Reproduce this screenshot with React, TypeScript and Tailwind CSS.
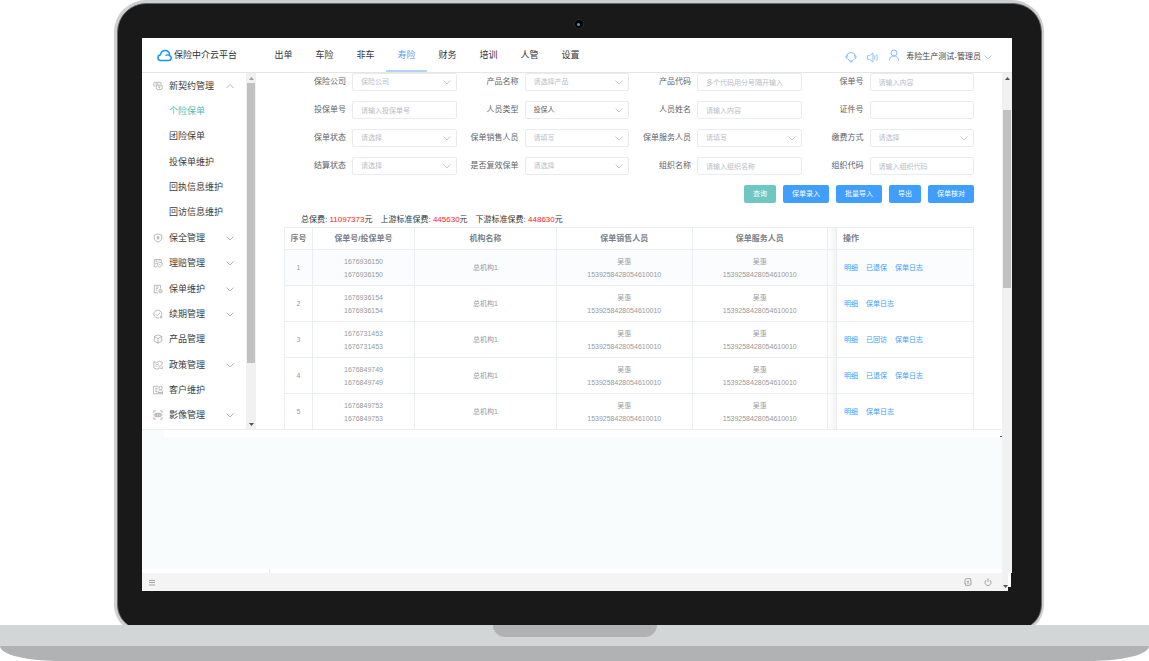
import React, { useState } from "react";

type IconName =
  | "contract"
  | "shield"
  | "claim"
  | "policy"
  | "renewal"
  | "product"
  | "rules"
  | "customer"
  | "image";

interface MenuEntry {
  label: string;
  icon?: IconName;
  arrow?: "up" | "down";
  active?: boolean;
}

interface Field {
  id: string;
  label: string;
  kind: "input" | "select";
  placeholder?: string;
  value?: string;
}

interface PolicyRow {
  no: string;
  links: string[];
}

const NAV_ITEMS = ["出单", "车险", "非车", "寿险", "财务", "培训", "人管", "设置"];

const MENU: MenuEntry[] = [
  { label: "新契约管理", icon: "contract", arrow: "up" },
  { label: "个险保单", active: true },
  { label: "团险保单" },
  { label: "投保单维护" },
  { label: "回执信息维护" },
  { label: "回访信息维护" },
  { label: "保全管理", icon: "shield", arrow: "down" },
  { label: "理赔管理", icon: "claim", arrow: "down" },
  { label: "保单维护", icon: "policy", arrow: "down" },
  { label: "续期管理", icon: "renewal", arrow: "down" },
  { label: "产品管理", icon: "product" },
  { label: "政策管理", icon: "rules", arrow: "down" },
  { label: "客户维护", icon: "customer" },
  { label: "影像管理", icon: "image", arrow: "down" },
];

const FIELDS: Field[] = [
  { id: "company", label: "保险公司", kind: "select", placeholder: "保险公司" },
  { id: "product", label: "产品名称", kind: "select", placeholder: "请选择产品" },
  { id: "productCode", label: "产品代码", kind: "input", placeholder: "多个代码用分号隔开输入" },
  { id: "policyNo", label: "保单号", kind: "input", placeholder: "请输入内容" },
  { id: "applyNo", label: "投保单号", kind: "input", placeholder: "请输入投保单号" },
  { id: "personType", label: "人员类型", kind: "select", value: "投保人" },
  { id: "personName", label: "人员姓名", kind: "input", placeholder: "请输入内容" },
  { id: "idNo", label: "证件号", kind: "input" },
  { id: "status", label: "保单状态", kind: "select", placeholder: "请选择" },
  { id: "seller", label: "保单销售人员", kind: "select", placeholder: "请填写" },
  { id: "server", label: "保单服务人员", kind: "select", placeholder: "请填写" },
  { id: "payMode", label: "缴费方式", kind: "select", placeholder: "请选择" },
  { id: "settle", label: "结算状态", kind: "select", placeholder: "请选择" },
  { id: "revived", label: "是否复效保单", kind: "select", placeholder: "请选择" },
  { id: "orgName", label: "组织名称", kind: "input", placeholder: "请输入组织名称" },
  { id: "orgCode", label: "组织代码", kind: "input", placeholder: "请输入组织代码" },
];

const TOTALS = [
  { label: "总保费", value: "11097373" },
  { label: "上游标准保费", value: "445630" },
  { label: "下游标准保费", value: "448630" },
];

const ROWS: PolicyRow[] = [
  { no: "1676936150", links: ["明细", "已退保", "保单日志"] },
  { no: "1676936154", links: ["明细", "保单日志"] },
  { no: "1676731453", links: ["明细", "已回访", "保单日志"] },
  { no: "1676849749", links: ["明细", "已退保", "保单日志"] },
  { no: "1676849753", links: ["明细", "保单日志"] },
];

const STAFF = { name: "吴惠", code: "1539258428054610010" };

const ICON_PATHS: Record<IconName, React.ReactNode> = {
  contract: (
    <>
      <path d="M6 12H4a2 2 0 0 1-2-2V5a2 2 0 0 1 2-2h13a2 2 0 0 1 2 2v3M6 7h8" />
      <path d="M8 10h13a1 1 0 0 1 1 1v5a5 5 0 0 1-5 5h-4a5 5 0 0 1-5-5zM12 14h6M15 14v4" />
    </>
  ),
  shield: (
    <>
      <path d="M12 2l9 3v7c0 5-4 8-9 10-5-2-9-5-9-10V5z" />
      <path d="M12 7v8M8 10h8M9 14h6" />
    </>
  ),
  claim: (
    <>
      <path d="M10 21H3V4h17v6M8 2v4M15 2v4M6 9h5M6 13h3" />
      <path d="M16 10l6 2v4c0 3-3 5-6 6-3-1-5-3-5-6v-4zM14 16h4" />
    </>
  ),
  policy: (
    <>
      <path d="M12 21H3V3h15v8M7 7h7M7 11h5M7 15h3" />
      <circle cx="18" cy="17" r="4" />
      <path d="M16 17h4" />
    </>
  ),
  renewal: (
    <>
      <path d="M15 21a9.500 9.500 0 1 1 5-4.500" />
      <path d="M7 13l3 3 7-7M17 17l4 4M21 17v4h-4" />
    </>
  ),
  product: (
    <>
      <path d="M12 2l9 4v11l-9 5-9-5V6zM3 6l9 5 9-5M12 11v11" />
    </>
  ),
  rules: (
    <>
      <path d="M2 4l7 2 7-3 6 2v4M2 4v15l7 3 7-3 6 2v-6M6 9l4 2 4-2M6 14l4 2" />
      <path d="M13 12l3 4 7-7" />
    </>
  ),
  customer: (
    <>
      <path d="M13 3H1v18h22v-3M5 8h6M5 12h5M5 16h5" />
      <circle cx="18" cy="7" r="4" />
      <path d="M12 18c0-4 3-6 6-6s5 2 5 6z" />
    </>
  ),
  image: (
    <>
      <path d="M2 7V2h5M17 2h5v5M22 17v5h-5M7 22H2v-5" />
      <path d="M5 8h14v8H5zM1 12h22M9 8v8M14 8v8" />
    </>
  ),
};

function MenuIcon({ name }: { name: IconName }) {
  return (
    <svg
      className="h-[10px] w-[10px] text-[#a3a3a3]"
      viewBox="0 0 24 24"
      fill="none"
      stroke="currentColor"
      strokeWidth={1.8}
      aria-hidden="true"
    >
      {ICON_PATHS[name]}
    </svg>
  );
}

function Chevron({ up = false, className }: { up?: boolean; className: string }) {
  return (
    <svg
      className={className}
      viewBox="0 0 8 8"
      fill="none"
      stroke="currentColor"
      strokeWidth={0.8}
      aria-hidden="true"
    >
      <path d={up ? "M0.500 6L4 2.500 7.500 6" : "M0.500 2.500L4 6 7.500 2.500"} />
    </svg>
  );
}

function ScrollArrow({ up = false, className = "text-gray-600" }: { up?: boolean; className?: string }) {
  return (
    <span className={`flex h-[10px] w-full shrink-0 items-center justify-center ${className}`}>
      <svg className="h-[3px] w-[5px]" viewBox="0 0 5 3" fill="currentColor" aria-hidden="true">
        <path d={up ? "M0 3L2.500 0 5 3z" : "M0 0L2.500 3 5 0z"} />
      </svg>
    </span>
  );
}

function TopBar() {
  const [current, setCurrent] = useState("寿险");

  return (
    <header className="flex h-[35px] items-center border-b border-[#e6e6e6] pl-[15px] pr-5">
      <svg className="h-[14px] w-[15px] text-[#1296fa]" viewBox="0 0 30 28" fill="none" stroke="currentColor" aria-hidden="true">
        <path
          d="M7 25H23.500a5 5 0 0 0 2-9.500C25 8.500 21 5 16 5 11 5 8 8.500 7 13.500A5.800 5.800 0 0 0 7 25z"
          strokeWidth={3}
          strokeLinejoin="round"
        />
        <path d="M17 15.500c2.500-2 5.500-2 8.500 0" strokeWidth={2.4} />
      </svg>
      <span className="ml-[2px] w-[89px] pt-[2px] text-[9px] text-[#333]">保险中介云平台</span>
      <nav className="flex self-stretch">
        {NAV_ITEMS.map((item) => (
          <button
            key={item}
            type="button"
            onClick={() => setCurrent(item)}
            className={`w-[41px] border-b-2 pt-1 text-[9px] ${
              current === item ? "border-[#b3d3fb] text-[#5b9df8]" : "border-transparent text-[#333]"
            }`}
          >
            {item}
          </button>
        ))}
      </nav>
      <div className="ml-auto flex items-center gap-[10px] text-[#8abcfa]">
        <button type="button" aria-label="客服">
          <svg className="mt-1 h-3 w-3" viewBox="0 0 24 24" fill="none" stroke="currentColor" strokeWidth={2}>
            <path d="M4 10a8 7 0 0 1 16 0M4 9c-3 0-3 6 0 6zM20 9c3 0 3 6 0 6z" />
            <path d="M6 16c1 3 3 4 6 4s5-1 6-4M10 20l2 3 3-3" />
          </svg>
        </button>
        <button type="button" aria-label="消息">
          <svg className="mt-1 h-[11px] w-[11px]" viewBox="0 0 24 24" fill="none" stroke="currentColor" strokeWidth={2}>
            <path d="M13 2L6 8H1v8h5l7 6zM17 7v10M21 5c2 4 2 10 0 14" />
          </svg>
        </button>
        <button type="button" className="flex items-center">
          <svg className="h-3 w-3" viewBox="0 0 24 24" fill="none" stroke="currentColor" strokeWidth={2} aria-hidden="true">
            <circle cx="12" cy="8" r="6" />
            <path d="M3 23c0-6 4-9 9-9s9 3 9 9" />
          </svg>
          <span className="ml-[6px] mr-[3px] mt-1 text-[8px] leading-3 text-[#444]">寿险生产测试-管理员</span>
          <Chevron className="mt-1 h-2 w-2" />
        </button>
      </div>
    </header>
  );
}

function Sidebar() {
  return (
    <aside className="flex w-[114px] shrink-0">
      <ul className="grid flex-1 auto-rows-fr pb-px">
        {MENU.map((entry) => (
          <li key={entry.label} className="flex">
            <button type="button" className="flex flex-1 items-center pl-[11px] pr-3 text-left">
              <span className="w-4">{entry.icon && <MenuIcon name={entry.icon} />}</span>
              <span className={`text-[9px] leading-3 ${entry.active ? "text-[#4dbdb5]" : "text-[#3c3c3c]"}`}>
                {entry.label}
              </span>
              {entry.arrow && (
                <Chevron up={entry.arrow === "up"} className="ml-auto h-2 w-2 text-[#a3a3a3]" />
              )}
            </button>
          </li>
        ))}
      </ul>
      <div className="flex w-[10px] flex-col bg-[#f1f1f1] px-px" aria-hidden="true">
        <ScrollArrow up className="text-gray-400" />
        <span className="flex-[5] bg-[#c1c1c1]" />
        <span className="flex-1" />
        <ScrollArrow />
      </div>
    </aside>
  );
}

function FormField({ field }: { field: Field }) {
  const boxClass =
    "h-[18px] w-full rounded-[2px] border border-[#e9ebf0] bg-white pl-2 pr-4 text-[7px] placeholder-[#b8bcc6] focus:border-blue-400 focus:outline-none";

  return (
    <div className="flex items-center">
      <label htmlFor={field.id} className="w-[68px] shrink-0 pr-[6px] text-right text-[8px] text-[#606266]">
        {field.label}
      </label>
      {field.kind === "input" ? (
        <input id={field.id} type="text" placeholder={field.placeholder} className={`min-w-0 ${boxClass}`} />
      ) : (
        <div className="relative min-w-0 flex-1">
          <select
            id={field.id}
            className={`block appearance-none ${boxClass} ${field.value ? "text-[#606266]" : "text-[#b8bcc6]"}`}
          >
            <option>{field.value ?? field.placeholder}</option>
          </select>
          <Chevron className="pointer-events-none absolute right-[6px] top-[5px] h-2 w-2 text-[#b8bcc6]" />
        </div>
      )}
    </div>
  );
}

function PolicyTable() {
  const head = "border-b border-r border-t border-[#ebeef0] font-bold text-[#7c8087]";
  const cell = "border-b border-r border-[#ebeef0] p-0 group-last:border-b-0";

  return (
    <table className="w-full table-fixed border-separate border-spacing-0 border-l border-[#ebeef0] text-center text-[7px] leading-[13px] text-[#999]">
      <colgroup>
        <col className="w-[28px]" />
        <col className="w-[102px]" />
        <col className="w-[142px]" />
        <col />
        <col />
        <col className="w-[9px]" />
        <col className="w-[137px]" />
      </colgroup>
      <thead>
        <tr className="h-[23px] text-[8px]">
          <th className={head}>序号</th>
          <th className={head}>保单号/投保单号</th>
          <th className={head}>机构名称</th>
          <th className={head}>保单销售人员</th>
          <th className={head}>保单服务人员</th>
          <td className={`${head} bg-linear-to-r from-white to-[#f4f4f4]`} />
          <th className={`${head} pl-[6px] text-left`}>操作</th>
        </tr>
      </thead>
      <tbody>
        {ROWS.map((row, i) => (
          <tr key={row.no} className={`group h-9 last:h-[35px] ${i === 0 ? "bg-[#fafcfe]" : "bg-white"}`}>
            <td className={cell}>{i + 1}</td>
            <td className={cell}>
              {row.no}
              <br />
              {row.no}
            </td>
            <td className={cell}>总机构1</td>
            <td className={cell}>
              {STAFF.name}
              <br />
              {STAFF.code}
            </td>
            <td className={cell}>
              {STAFF.name}
              <br />
              {STAFF.code}
            </td>
            <td className={`${cell} bg-linear-to-r from-white to-[#f4f4f4]`} />
            <td className={cell}>
              <div className="flex gap-2 pl-[7px]">
                {row.links.map((link) => (
                  <a key={link} href="#" className="text-[#409eff]">
                    {link}
                  </a>
                ))}
              </div>
            </td>
          </tr>
        ))}
      </tbody>
    </table>
  );
}

function PolicyPage() {
  const button = "h-[18px] rounded-[2px] text-[7px] text-white";

  return (
    <main className="min-w-0 flex-1 pl-7 pr-7">
      <form onSubmit={(e) => e.preventDefault()}>
        <div className="grid grid-cols-4 gap-y-[10px]">
          {FIELDS.map((field) => (
            <FormField key={field.id} field={field} />
          ))}
        </div>
        <div className="mt-[10px] flex justify-end gap-[7px]">
          <button type="submit" className={`${button} w-8 bg-[#70c6c0]`}>
            查询
          </button>
          <button type="button" className={`${button} w-[46px] bg-[#409eff]`}>
            保单录入
          </button>
          <button type="button" className={`${button} w-[46px] bg-[#409eff]`}>
            批量导入
          </button>
          <button type="button" className={`${button} w-8 bg-[#409eff]`}>
            导出
          </button>
          <button type="button" className={`${button} w-[46px] bg-[#409eff]`}>
            保单核对
          </button>
        </div>
      </form>
      <p className="mt-2 flex h-4 items-center gap-2 pl-[17px] pt-px text-[8px] text-[#333]">
        {TOTALS.map((total) => (
          <span key={total.label}>
            {total.label}: <span className="text-[#ff1a1a]">{total.value}</span>元
          </span>
        ))}
      </p>
      <PolicyTable />
    </main>
  );
}

function StatusBar() {
  return (
    <footer className="flex h-[18px] bg-[#191919]">
      <div className="flex flex-1 items-center gap-3 bg-[#f4f4f4] pl-[7px] pr-[10px] text-[#a3a3a3]">
        <button type="button" aria-label="菜单" className="mr-auto">
          <svg className="h-[7px] w-[6px]" viewBox="0 0 6 7" fill="none" stroke="currentColor">
            <path d="M0 1.500h6M0 3.500h6M0 6h6" />
          </svg>
        </button>
        <button type="button" aria-label="刷新">
          <svg className="h-2 w-2" viewBox="0 0 24 24" fill="none" stroke="currentColor" strokeWidth={3}>
            <path d="M20 9V2H7a4 4 0 0 0-4 4v12M4 15v7h13a4 4 0 0 0 4-4V8M8 10h7M9 15h7" />
          </svg>
        </button>
        <button type="button" aria-label="退出">
          <svg className="h-2 w-2" viewBox="0 0 24 24" fill="none" stroke="currentColor" strokeWidth={3}>
            <path d="M7 6a9 9 0 1 0 10 0M12 1v11" />
          </svg>
        </button>
      </div>
      <div className="flex w-[6px] items-end bg-[#f1f1f1]" aria-hidden="true">
        <ScrollArrow />
      </div>
      <span className="mr-px h-[14px] w-[3px] bg-white" />
    </footer>
  );
}

function Screen() {
  return (
    <div>
      <div className="bg-white">
        <TopBar />
        <div className="flex">
          <div className="min-w-0 flex-1">
            <div className="flex">
              <Sidebar />
              <PolicyPage />
            </div>
            <div className="border-t border-[#eee] bg-[#f8fcfd] pb-[132px]">
              <div className="ml-[22px] flex h-[7px] items-end justify-end bg-white">
                <span className="h-px w-[2px] bg-gray-600" />
              </div>
            </div>
            <div className="flex h-1 pl-[127px]">
              <span className="w-px bg-gray-200" />
            </div>
          </div>
          <div className="flex w-[10px] flex-col bg-[#f1f1f1] px-px" aria-hidden="true">
            <ScrollArrow up />
            <span className="h-[27px]" />
            <span className="h-[178px] bg-[#c1c1c1]" />
          </div>
        </div>
      </div>
      <StatusBar />
    </div>
  );
}

export default function App() {
  return (
    <div
      lang="zh-CN"
      className="flex min-h-screen flex-col overflow-hidden bg-white font-['Liberation_Sans','Noto_Sans_CJK_SC',sans-serif]"
    >
      <div className="-mb-2 ml-[114px] mr-[105px] rounded-t-[32px] rounded-b-[28px] border-[3px] border-r-2 border-[#cdcfd1]">
        <div className="rounded-t-[29px] rounded-b-[25px] border border-[#66686b] bg-[#191919] pb-[38px] pl-6 pr-[29px]">
          <div className="flex h-[34px] justify-center pl-[3px] pt-[15px]">
            <span className="flex h-[10px] w-[10px] items-center justify-center rounded-full border border-[#2b2b2b] bg-black">
              <span className="h-[3px] w-[3px] rounded-full bg-[#3aa3c4]" />
            </span>
          </div>
          <Screen />
        </div>
      </div>
      <div className="relative">
        <div className="flex h-[21px] justify-center bg-[#d2d6d7]">
          <span className="h-3 w-[164px] rounded-b-[14px] bg-[#b1b2b4]" />
        </div>
        <div className="h-[15px] rounded-b-[60px_16px] bg-[#b1b2b4]" />
      </div>
    </div>
  );
}
